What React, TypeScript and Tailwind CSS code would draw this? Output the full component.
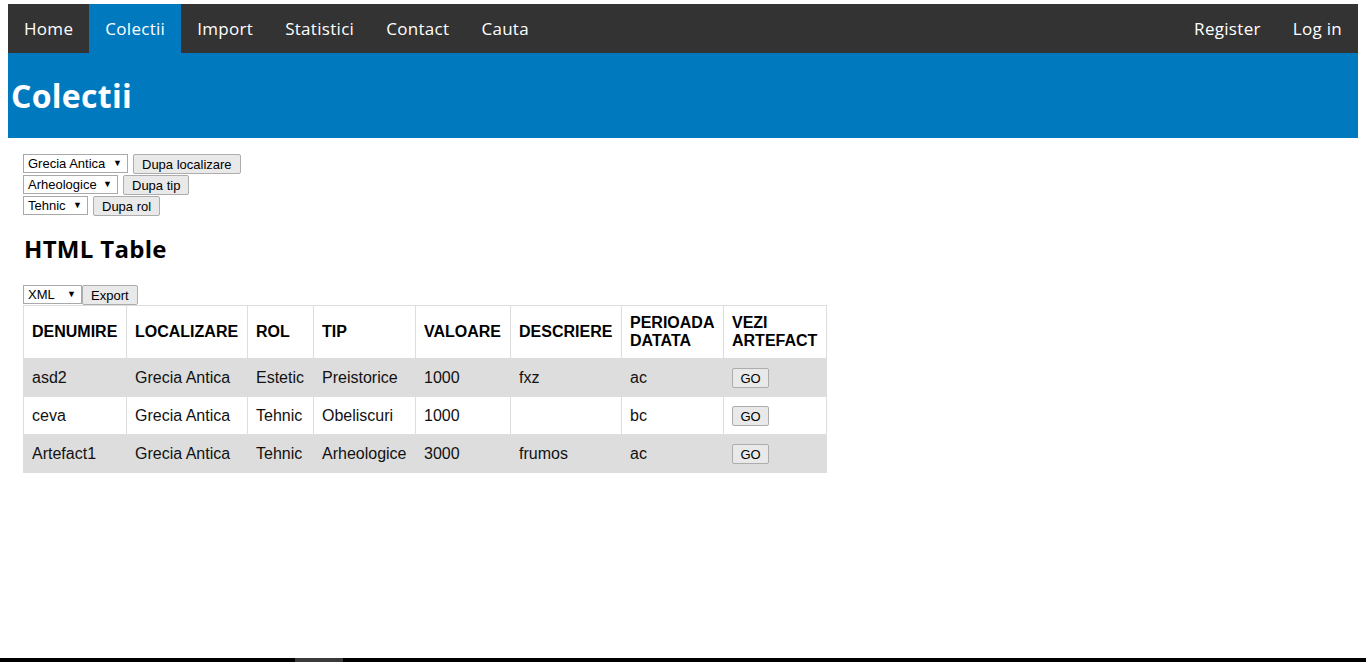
import React from 'react';

const rows = [
    { name: 'asd2', loc: 'Grecia Antica', rol: 'Estetic', tip: 'Preistorice', val: '1000', desc: 'fxz', per: 'ac' },
    { name: 'ceva', loc: 'Grecia Antica', rol: 'Tehnic', tip: 'Obeliscuri', val: '1000', desc: '', per: 'bc' },
    { name: 'Artefact1', loc: 'Grecia Antica', rol: 'Tehnic', tip: 'Arheologice', val: '3000', desc: 'frumos', per: 'ac' },
];

const heads = ['DENUMIRE', 'LOCALIZARE', 'ROL', 'TIP', 'VALOARE', 'DESCRIERE', 'PERIOADA DATATA', 'VEZI ARTEFACT'];
const widths = ['w-[103px]', 'w-[121px]', 'w-[66px]', 'w-[102px]', 'w-[95px]', 'w-[111px]', 'w-[102px]', 'w-[103px]'];

function FakeSelect({ label, className }: { label: string; className: string }) {
    return (
        <span className={`relative inline-flex items-center h-[19px] border border-[#a9a9a9] bg-white pl-[4px] text-[13px] leading-none text-black ${className}`}>
            {label}
            <span className="absolute right-[5px] top-[4px] text-[9px] leading-none">▼</span>
        </span>
    );
}

function Btn({ children, className = '' }: { children: React.ReactNode; className?: string }) {
    return (
        <button className={`inline-flex items-center justify-center h-[20px] border border-[#adadad] bg-[#e9e9e9] rounded-[2px] px-[8px] text-[13px] leading-none text-black ${className}`}>
            {children}
        </button>
    );
}

export default function App() {
    const navFont = { fontFamily: '"Open Sans", "Noto Sans", sans-serif' };
    return (
        <div className="min-h-[662px] flex flex-col bg-white" style={{ fontFamily: '"Liberation Sans", Arial, sans-serif' }}>
            <div className="px-2 pt-[4px]">
                <nav className="flex bg-[#333333] h-[49px] text-white text-[17px] tracking-[0.3px]" style={navFont}>
                    <a className="px-[16px] flex items-center">Home</a>
                    <a className="px-[16px] flex items-center bg-[#0079bf]">Colectii</a>
                    <a className="px-[16px] flex items-center">Import</a>
                    <a className="px-[16px] flex items-center">Statistici</a>
                    <a className="px-[16px] flex items-center">Contact</a>
                    <a className="px-[16px] flex items-center">Cauta</a>
                    <div className="ml-auto flex">
                        <a className="px-[16px] flex items-center">Register</a>
                        <a className="px-[16px] flex items-center">Log in</a>
                    </div>
                </nav>
                <header className="bg-[#0079bf] h-[85px] flex items-center pl-[3px]">
                    <h1 className="text-white font-bold text-[32px] leading-none tracking-[0.3px]" style={navFont}>Colectii</h1>
                </header>

                <div className="pl-[15px] pt-[16px]">
                    <div className="flex flex-col gap-[1px]">
                        <div className="flex gap-[5px]">
                            <FakeSelect label="Grecia Antica" className="w-[105px]" />
                            <Btn>Dupa localizare</Btn>
                        </div>
                        <div className="flex gap-[5px]">
                            <FakeSelect label="Arheologice" className="w-[95px]" />
                            <Btn>Dupa tip</Btn>
                        </div>
                        <div className="flex gap-[5px]">
                            <FakeSelect label="Tehnic" className="w-[65px]" />
                            <Btn>Dupa rol</Btn>
                        </div>
                    </div>

                    <h2 className="mt-[18px] ml-[1px] text-[24px] font-bold leading-[30px] text-black tracking-[0.3px]" style={navFont}>HTML Table</h2>

                    <div className="flex mt-[21px]">
                        <FakeSelect label="XML" className="w-[59px]" />
                        <Btn className="px-[8px]">Export</Btn>
                    </div>

                    <table className="border-collapse text-[16px] text-[#111]">
                        <thead>
                            <tr className="bg-white h-[53px]">
                                {heads.map((h, i) => (
                                    <th key={h} className={`${widths[i]} border border-[#dddddd] px-[8px] text-left font-bold leading-[18px] text-black`}>
                                        {h.split(' ').map((w) => (
                                            <div key={w}>{w}</div>
                                        ))}
                                    </th>
                                ))}
                            </tr>
                        </thead>
                        <tbody>
                            {rows.map((r, i) => (
                                <tr key={r.name} className={`h-[38px] ${i % 2 === 0 ? 'bg-[#dddddd]' : 'bg-white'}`}>
                                    {[r.name, r.loc, r.rol, r.tip, r.val, r.desc, r.per].map((c, j) => (
                                        <td key={j} className="border border-[#dddddd] px-[8px] text-left">
                                            {c}
                                        </td>
                                    ))}
                                    <td className="border border-[#dddddd] px-[8px]">
                                        <Btn className="w-[37px] mt-[2px]">GO</Btn>
                                    </td>
                                </tr>
                            ))}
                        </tbody>
                    </table>
                </div>
            </div>
            <div className="mt-auto h-[4px] bg-black flex">
                <div className="ml-[295px] w-[48px] bg-[#3a3a3a]" />
            </div>
        </div>
    );
}
